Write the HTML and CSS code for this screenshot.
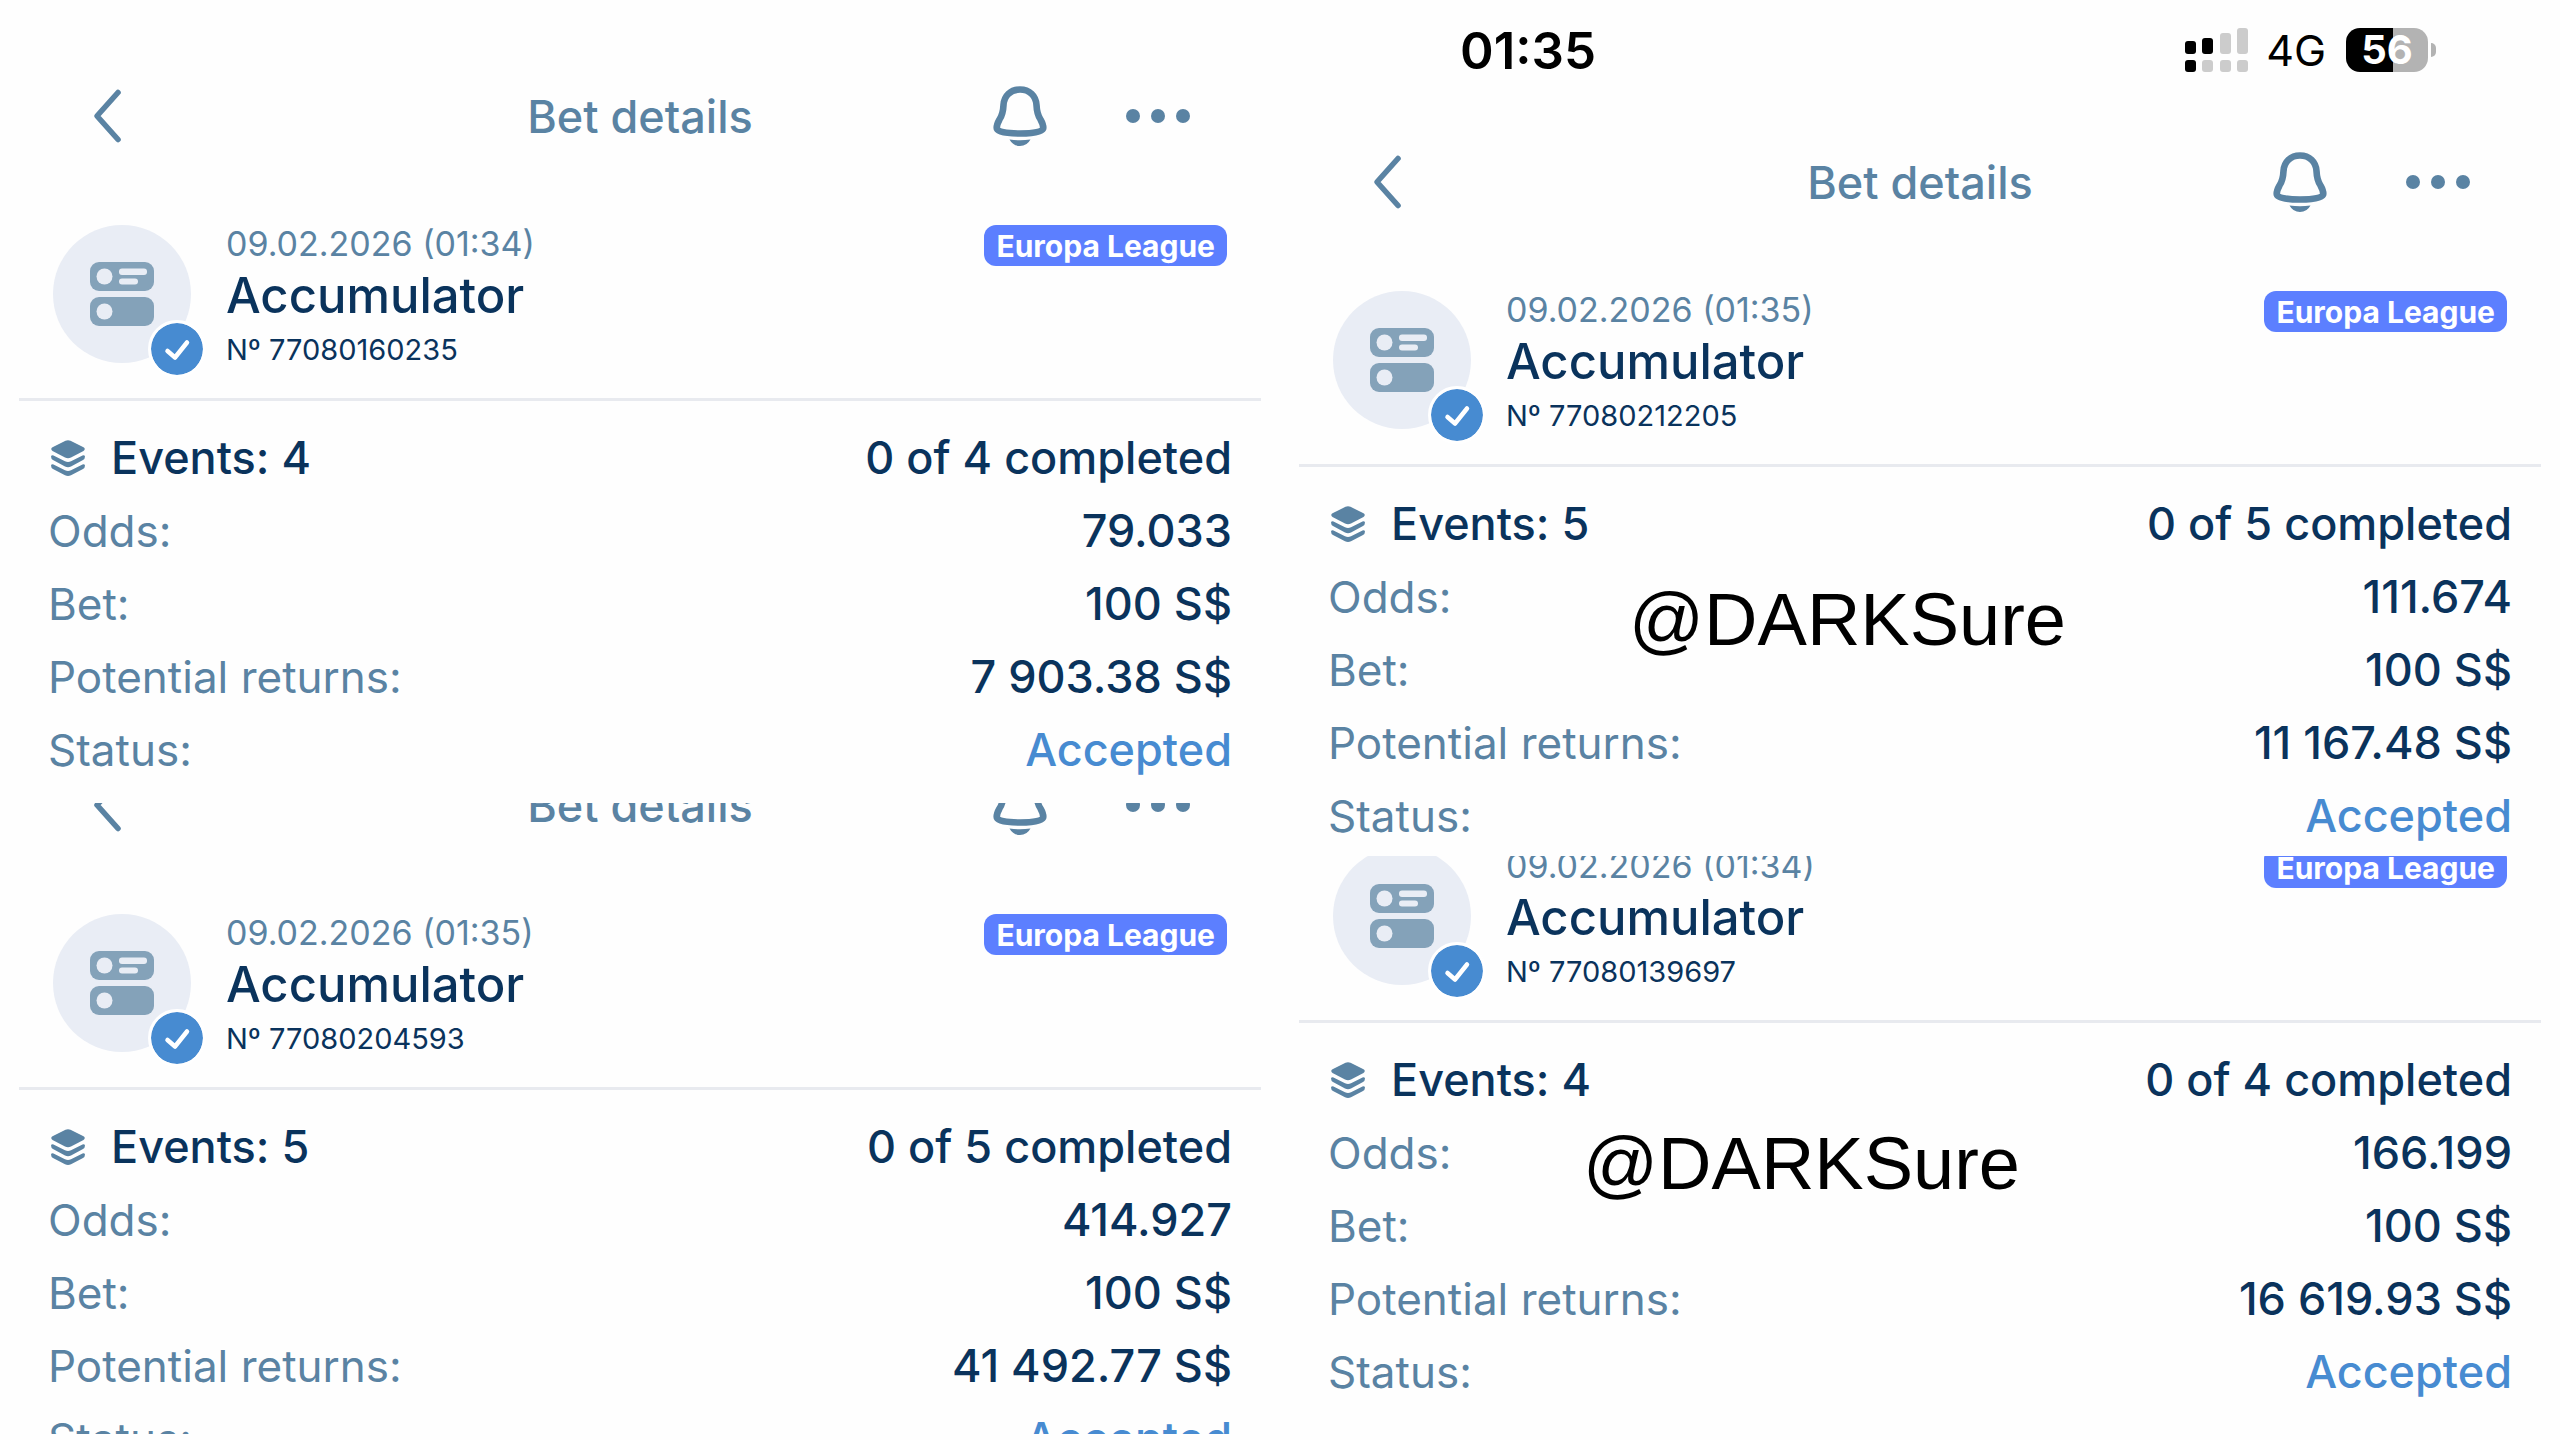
FILE: index.html
```html
<!DOCTYPE html>
<html lang="en">
<head>
    <meta charset="UTF-8">
    <meta name="viewport" content="width=device-width, initial-scale=1.0">
    <title>Bet details</title>
    <link rel="stylesheet" href="styles.css">
</head>
<body>
<!-- Shared icons -->
<svg class="sprite" aria-hidden="true">
    <symbol id="icon-back" viewBox="0 0 32 56">
        <path d="M28 4.500L7 28l21 23.500" fill="none" stroke="currentColor" stroke-width="5.600" stroke-linecap="round" stroke-linejoin="round"/>
    </symbol>
    <symbol id="icon-bell" viewBox="0 0 54 62">
        <path d="M27 4.500C17.500 4.500 11 11 10.500 20C10.200 27 9.500 30 6.500 34.500C4.500 38 3.700 40 3.700 43C3.700 47 14 48.500 27 48.500S50.300 47 50.300 43C50.300 40 49.500 38 47.500 34.500C44.500 30 43.800 27 43.500 20C43 11 36.500 4.500 27 4.500Z" fill="none" stroke="currentColor" stroke-width="6.600" stroke-linejoin="round"/>
        <path d="M16.500 54.500Q27 56 37.500 54.500Q34 61 27 61T16.500 54.500Z" fill="currentColor"/>
    </symbol>
    <symbol id="icon-more" viewBox="0 0 64 14">
        <g fill="currentColor"><circle cx="7" cy="7" r="7"/><circle cx="32" cy="7" r="7"/><circle cx="57" cy="7" r="7"/></g>
    </symbol>
    <symbol id="icon-accumulator" viewBox="0 0 64 64">
        <rect width="64" height="29" rx="9" fill="#84a2b9"/>
        <rect y="35" width="64" height="29" rx="9" fill="#84a2b9"/>
        <g fill="#e9edf5">
            <circle cx="14.500" cy="14.500" r="8"/>
            <circle cx="14.500" cy="49.500" r="8"/>
            <rect x="29" y="6.500" width="28" height="6.500" rx="3"/>
            <rect x="29" y="16.500" width="19" height="6" rx="3"/>
        </g>
    </symbol>
    <symbol id="icon-check" viewBox="0 0 52 52">
        <circle cx="26" cy="26" r="26" fill="#478bd1"/>
        <path d="M16.500 28l7.500 6.500L36 19.500" fill="none" stroke="#fff" stroke-width="4.500" stroke-linecap="round" stroke-linejoin="round"/>
    </symbol>
    <symbol id="icon-layers" viewBox="0 0 34 36">
        <g fill="currentColor">
            <path d="M14.500 .8Q17 -.3 19.500 .8L32.500 7.300Q35 9 32.500 11L20 17.500Q17 19 14 17.500L1.500 11Q-1 9 1.500 7.300Z"/>
            <path d="M0 16.500Q.5 14.700 2.500 15.500L14 21.200Q17 22.700 20 21.200L31.500 15.500Q33.500 14.700 34 16.500Q34 18.800 32 20L20 26.500Q17 28 14 26.500L2 20Q0 18.800 0 16.500Z"/>
            <path d="M0 25.500Q.5 23.700 2.500 24.500L14 30.200Q17 31.700 20 30.200L31.500 24.500Q33.500 23.700 34 25.500Q34 27.800 32 29L20 35.200Q17 36.700 14 35.200L2 29Q0 27.800 0 25.500Z"/>
        </g>
    </symbol>
</svg>

<main class="board">
    <div class="column">
        <section class="shot shot-first">
            <nav class="topbar">
                <button class="back" type="button" aria-label="Back"><svg><use href="#icon-back"/></svg></button>
                <h1>Bet details</h1>
                <button class="bell" type="button" aria-label="Notifications"><svg><use href="#icon-bell"/></svg></button>
                <button class="more" type="button" aria-label="More"><svg><use href="#icon-more"/></svg></button>
            </nav>
            <header class="bet-head">
                <div class="avatar">
                    <svg class="type"><use href="#icon-accumulator"/></svg>
                    <svg class="check"><use href="#icon-check"/></svg>
                </div>
                <div class="bet-info">
                    <p class="date">09.02.2026 (01:34)</p>
                    <h2>Accumulator</h2>
                    <p class="number">Nº 77080160235</p>
                </div>
                <span class="tag">Europa League</span>
            </header>
            <dl class="details">
                <div class="events"><dt><svg><use href="#icon-layers"/></svg>Events: 4</dt><dd>0 of 4 completed</dd></div>
                <div><dt>Odds:</dt><dd>79.033</dd></div>
                <div><dt>Bet:</dt><dd>100 S$</dd></div>
                <div><dt>Potential returns:</dt><dd>7 903.38 S$</dd></div>
                <div><dt>Status:</dt><dd class="accepted">Accepted</dd></div>
            </dl>
        </section>

        <section class="shot shot-rest scrolled-nav">
            <nav class="topbar">
                <button class="back" type="button" aria-label="Back"><svg><use href="#icon-back"/></svg></button>
                <h1>Bet details</h1>
                <button class="bell" type="button" aria-label="Notifications"><svg><use href="#icon-bell"/></svg></button>
                <button class="more" type="button" aria-label="More"><svg><use href="#icon-more"/></svg></button>
            </nav>
            <header class="bet-head">
                <div class="avatar">
                    <svg class="type"><use href="#icon-accumulator"/></svg>
                    <svg class="check"><use href="#icon-check"/></svg>
                </div>
                <div class="bet-info">
                    <p class="date">09.02.2026 (01:35)</p>
                    <h2>Accumulator</h2>
                    <p class="number">Nº 77080204593</p>
                </div>
                <span class="tag">Europa League</span>
            </header>
            <dl class="details">
                <div class="events"><dt><svg><use href="#icon-layers"/></svg>Events: 5</dt><dd>0 of 5 completed</dd></div>
                <div><dt>Odds:</dt><dd>414.927</dd></div>
                <div><dt>Bet:</dt><dd>100 S$</dd></div>
                <div><dt>Potential returns:</dt><dd>41 492.77 S$</dd></div>
                <div><dt>Status:</dt><dd class="accepted">Accepted</dd></div>
            </dl>
        </section>
    </div>

    <div class="column">
        <section class="shot shot-phone">
            <div class="status-bar">
                <span class="time">01:35</span>
                <svg class="signal" viewBox="0 0 64 44">
                    <g fill="#ccc">
                        <rect x="17" y="32" width="11" height="12" rx="3"/>
                        <rect x="35" y="32" width="11" height="12" rx="3"/>
                        <rect x="52" y="32" width="11" height="12" rx="3"/>
                        <rect x="35" y="5" width="11" height="21" rx="3"/>
                        <rect x="52" y="0" width="11" height="26" rx="3"/>
                    </g>
                    <rect y="32" width="11" height="12" rx="3"/>
                    <rect y="13" width="11" height="13" rx="3"/>
                    <rect x="17" y="10" width="11" height="16" rx="3"/>
                </svg>
                <span class="network">4G</span>
                <span class="battery">56</span>
            </div>
            <nav class="topbar">
                <button class="back" type="button" aria-label="Back"><svg><use href="#icon-back"/></svg></button>
                <h1>Bet details</h1>
                <button class="bell" type="button" aria-label="Notifications"><svg><use href="#icon-bell"/></svg></button>
                <button class="more" type="button" aria-label="More"><svg><use href="#icon-more"/></svg></button>
            </nav>
            <header class="bet-head">
                <div class="avatar">
                    <svg class="type"><use href="#icon-accumulator"/></svg>
                    <svg class="check"><use href="#icon-check"/></svg>
                </div>
                <div class="bet-info">
                    <p class="date">09.02.2026 (01:35)</p>
                    <h2>Accumulator</h2>
                    <p class="number">Nº 77080212205</p>
                </div>
                <span class="tag">Europa League</span>
            </header>
            <dl class="details">
                <div class="events"><dt><svg><use href="#icon-layers"/></svg>Events: 5</dt><dd>0 of 5 completed</dd></div>
                <div><dt>Odds:</dt><dd>111.674</dd></div>
                <div><dt>Bet:</dt><dd>100 S$</dd></div>
                <div><dt>Potential returns:</dt><dd>11 167.48 S$</dd></div>
                <div><dt>Status:</dt><dd class="accepted">Accepted</dd></div>
            </dl>
            <span class="watermark watermark-top">@DARKSure</span>
        </section>

        <section class="shot shot-rest scrolled-head">
            <header class="bet-head">
                <div class="avatar">
                    <svg class="type"><use href="#icon-accumulator"/></svg>
                    <svg class="check"><use href="#icon-check"/></svg>
                </div>
                <div class="bet-info">
                    <p class="date">09.02.2026 (01:34)</p>
                    <h2>Accumulator</h2>
                    <p class="number">Nº 77080139697</p>
                </div>
                <span class="tag">Europa League</span>
            </header>
            <dl class="details">
                <div class="events"><dt><svg><use href="#icon-layers"/></svg>Events: 4</dt><dd>0 of 4 completed</dd></div>
                <div><dt>Odds:</dt><dd>166.199</dd></div>
                <div><dt>Bet:</dt><dd>100 S$</dd></div>
                <div><dt>Potential returns:</dt><dd>16 619.93 S$</dd></div>
                <div><dt>Status:</dt><dd class="accepted">Accepted</dd></div>
            </dl>
            <span class="watermark watermark-bottom">@DARKSure</span>
        </section>
    </div>
</main>
</body>
</html>
```
FILE: styles.css
```css
* {
    box-sizing: border-box;
}

body {
    margin: 0;
    background-color: #fefefe;
    color: #0a335c;
    font-family: Inter, "Liberation Sans", sans-serif;
    font-size: 45px;
}

h1, h2, p, dl, dd {
    margin: 0;
    font-weight: 500;
}

.sprite {
    display: none;
}

.board {
    display: grid;
    grid-template-columns: 1fr 1fr;
    height: 100vh;
    padding-bottom: 6px;
}

.column {
    display: flex;
    flex-direction: column;
    min-height: 0;
}

.shot {
    position: relative;
    overflow: hidden;
    flex-shrink: 0;
}

.shot-first {
    padding: 66px 0 17px;
}

.shot-phone {
    padding-bottom: 4px;
}

.shot-rest {
    flex: 1 1 0;
    min-height: 0;
}

/* the lower shots start part way down */
.scrolled-nav .topbar {
    margin-top: -48px;
}

.scrolled-head .bet-head {
    margin-top: -68px;
}

/* phone status bar */
.status-bar {
    display: flex;
    align-items: center;
    height: 100px;
    margin-bottom: 32px;
    padding: 0 124px 0 180px;
    color: #000;
}

.time {
    margin-right: auto;
    font-size: 51px;
    font-weight: 600;
}

.signal {
    width: 64px;
    height: 44px;
}

.network {
    margin: 0 20px 0 17px;
    font-size: 43px;
}

.battery {
    position: relative;
    width: 82px;
    height: 44px;
    margin-right: 8px;
    border-radius: 14px;
    background: linear-gradient(90deg, #000 57%, #b3b3b3 57%);
    color: #fff;
    font-size: 40px;
    font-weight: 700;
    line-height: 44px;
    text-align: center;
}

.battery::after {
    content: "";
    position: absolute;
    top: 15px;
    right: -8px;
    width: 5px;
    height: 14px;
    border-radius: 0 6px 6px 0;
    background-color: #b3b3b3;
}

/* title bar */
.topbar {
    display: grid;
    grid-template-columns: 1fr auto 1fr;
    align-items: center;
    height: 100px;
    padding: 0 90px;
    color: #5a83a3;
}

.topbar h1 {
    grid-column: 2;
    font-size: 45px;
}

button {
    display: flex;
    padding: 0;
    border: none;
    background: none;
    color: inherit;
    cursor: pointer;
}

.topbar button {
    grid-row: 1;
}

.back svg {
    width: 32px;
    height: 56px;
}

.topbar .bell, .topbar .more {
    grid-column: 3;
    justify-self: end;
}

.topbar .bell {
    margin-right: 143px;
}

.bell svg {
    width: 54px;
    height: 62px;
}

.more svg {
    width: 64px;
    height: 14px;
}

/* bet type, date, number */
.bet-head {
    display: flex;
    align-items: flex-start;
    height: 235px;
    margin: 0 19px;
    padding: 59px 34px 0;
    border-bottom: 3px solid #e8eaef;
}

.avatar {
    position: relative;
    display: flex;
    align-items: center;
    justify-content: center;
    width: 138px;
    height: 138px;
    border-radius: 50%;
    background-color: #e9edf5;
}

.type {
    width: 64px;
    height: 64px;
}

.check {
    position: absolute;
    right: -15px;
    bottom: -15px;
    width: 58px;
    height: 58px;
    border: 3px solid #fff;
    border-radius: 50%;
}

.bet-info {
    flex: 1;
    margin-left: 35px;
}

.date {
    color: #5a83a3;
    font-size: 34px;
    font-weight: 400;
    line-height: 37px;
}

.bet-info h2 {
    font-size: 49px;
    line-height: 67px;
}

.number {
    font-size: 29px;
    font-weight: 400;
    line-height: 42px;
}

.tag {
    padding: 1px 12px 0;
    border-radius: 12px;
    background-color: #5c7fff;
    color: #fff;
    font-size: 30px;
    font-weight: 700;
    line-height: 40px;
}

/* label and value rows */
.details {
    padding: 20px 48px 0;
}

.details div {
    display: flex;
    align-items: center;
    justify-content: space-between;
    height: 73px;
}

.details dt {
    color: #5a83a3;
    font-size: 44px;
    font-weight: 400;
}

.details .events dt {
    display: flex;
    align-items: center;
    color: #0a335c;
    font-size: 45px;
    font-weight: 500;
}

.events svg {
    width: 34px;
    height: 36px;
    margin: 0 26px 0 3px;
    color: #5a83a3;
}

.details .accepted {
    color: #478bd1;
}

.watermark {
    position: absolute;
    color: #000;
    font-family: "Liberation Sans", sans-serif;
    font-size: 74px;
    line-height: 80px;
}

.watermark-top {
    top: 580px;
    left: 349px;
}

.watermark-bottom {
    top: 268px;
    left: 303px;
}
```
